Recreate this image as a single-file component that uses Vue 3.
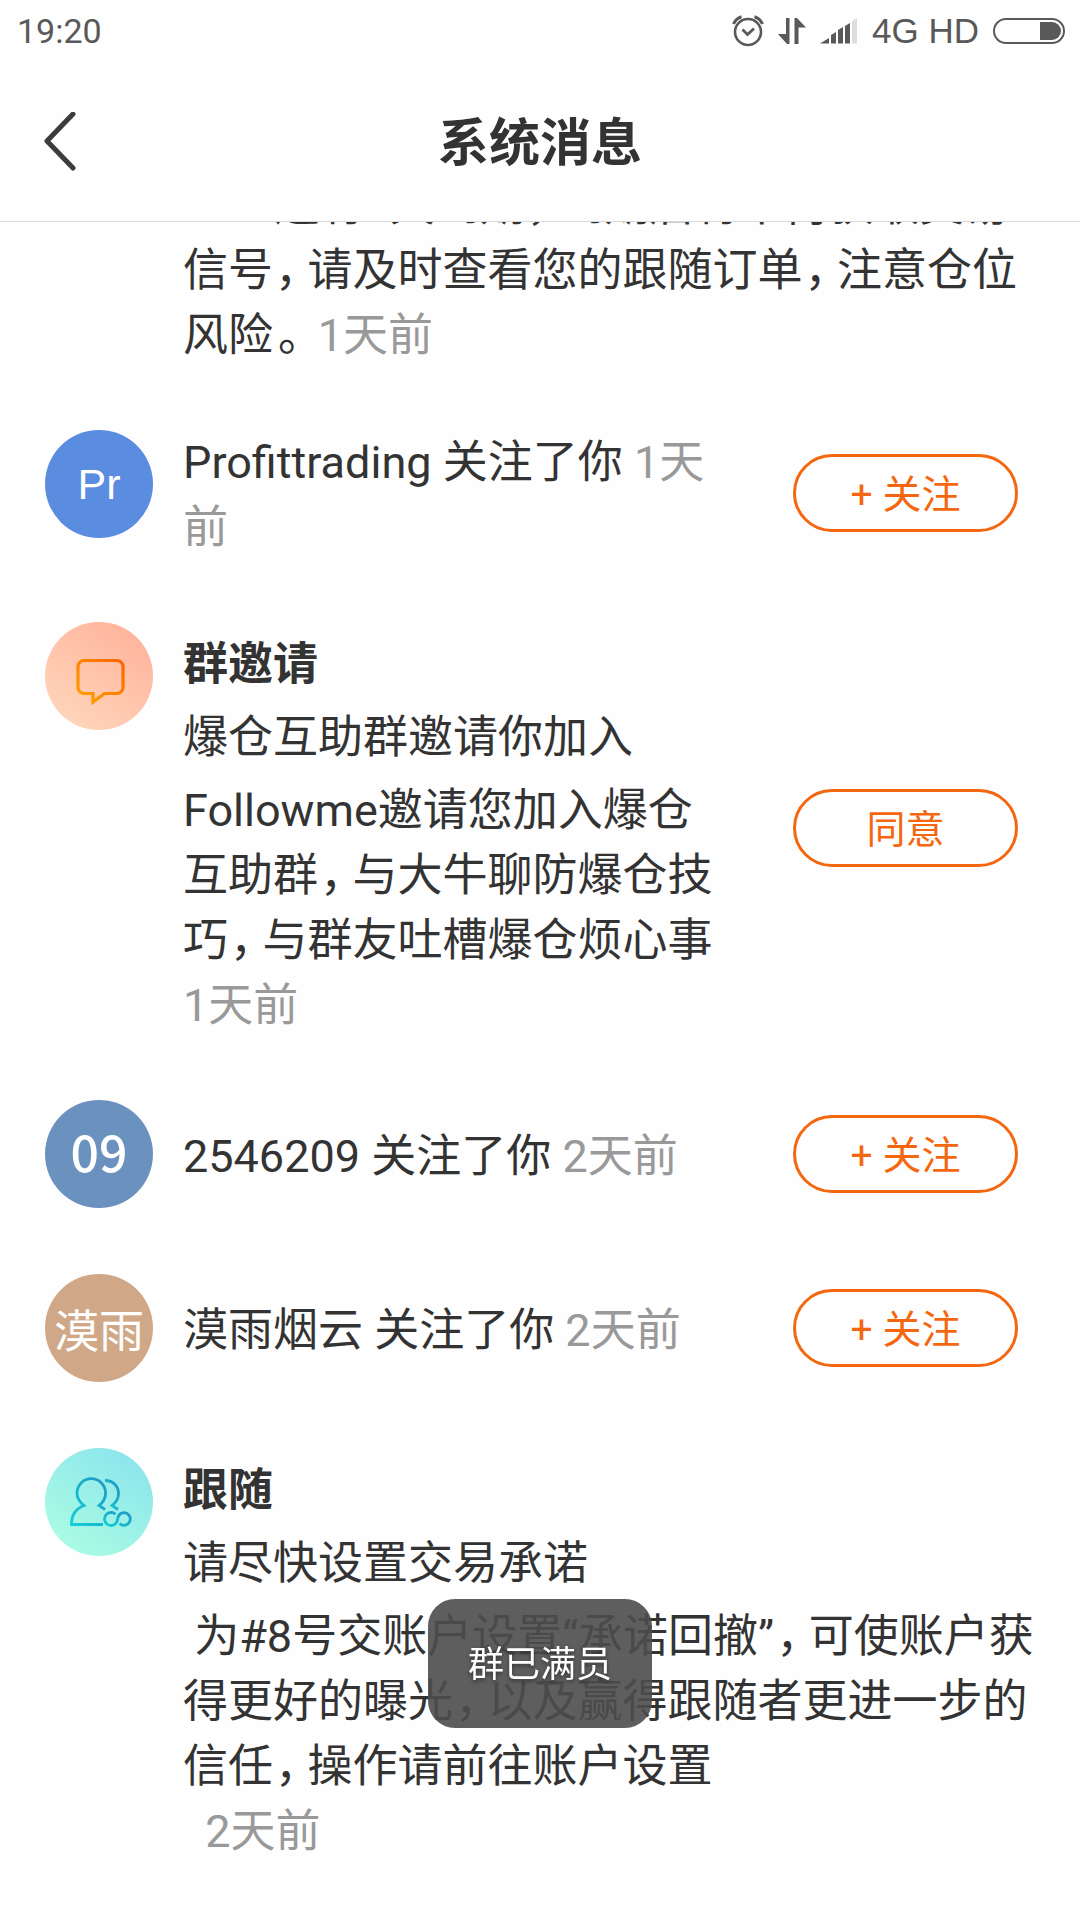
<script setup>
const messages = [
  {
    id: 1,
    body: 'EA8 还有3天到期，到期后将不再获取交易信号，请及时查看您的跟随订单，注意仓位风险。',
    time: '1天前',
  },
  { id: 2, avatar: 'blue', initials: 'Pr', body: 'Profittrading 关注了你', time: '1天前', action: '+ 关注' },
  {
    id: 3,
    avatar: 'invite',
    title: '群邀请',
    subtitle: '爆仓互助群邀请你加入',
    body: 'Followme邀请您加入爆仓互助群，与大牛聊防爆仓技巧，与群友吐槽爆仓烦心事',
    time: '1天前',
    action: '同意',
  },
  { id: 4, avatar: 'steel', initials: '09', body: '2546209 关注了你', time: '2天前', action: '+ 关注' },
  { id: 5, avatar: 'tan', initials: '漠雨', body: '漠雨烟云 关注了你', time: '2天前', action: '+ 关注' },
  {
    id: 6,
    avatar: 'follow',
    title: '跟随',
    subtitle: '请尽快设置交易承诺',
    body: '\u00a0为#8号交账户设置“承诺回撤”，可使账户获得更好的曝光，以及赢得跟随者更进一步的信任，操作请前往账户设置',
    time: '\u00a0\u00a02天前',
    timeBelow: true,
  },
]

// Full-width punctuation uses its half-width form with a little room on each side.
const marks = { '，': 'comma', '。': 'stop' }
const split = (text) => text.split(/([，。])/).filter(Boolean)
</script>

<template>
  <div class="screen">
    <header class="top">
      <div class="status">
        <span class="clock">19:20</span>
        <div class="indicators">
          <svg class="alarm" width="32" height="32" viewBox="0 0 32 32" fill="none" stroke="#595959">
            <circle cx="16" cy="17" r="13" stroke-width="2.6" />
            <path d="M10.500 14.500 15.500 19.500 22 13.500" stroke-width="2.800" />
            <path d="M1.500 9Q4 3.500 9.500 1.800M30.500 9Q28 3.500 22.500 1.800" stroke-width="3" />
          </svg>
          <svg class="data" width="28" height="28" viewBox="0 0 28 28" fill="#595959">
            <path d="M8 1h3.500v26H9L0 17h8zM16.500 1H19l9 9.500h-7.500V27h-4z" />
          </svg>
          <svg class="signal" width="38" height="26" viewBox="0 0 38 26" fill="#595959">
            <path d="M0 25.500 9 20v5.500zM11 17l5-3v11.500h-5zM18 12l5-3v16.500h-5zM25 8l5-3v20.500h-5z" />
            <path d="M32 3l5-3v25.500h-5z" fill="#dedede" />
          </svg>
          <span class="network">4G HD</span>
          <svg class="battery" width="72" height="26" viewBox="0 0 72 26">
            <rect x="1" y="1" width="70" height="24" rx="12" fill="none" stroke="#595959" stroke-width="2" />
            <path d="M47 4h12a9 9 0 0 1 0 18H47z" fill="#595959" />
          </svg>
        </div>
      </div>
      <nav class="nav">
        <button class="back" type="button" aria-label="返回">
          <svg width="34" height="60" viewBox="0 0 34 60" fill="none" stroke="#3c3c3c" stroke-width="5" stroke-linecap="round" stroke-linejoin="round">
            <path d="M30 2 4 29l26 27" />
          </svg>
        </button>
        <h1>系统消息</h1>
      </nav>
    </header>

    <main class="viewport">
      <ul class="list">
        <li v-for="m in messages" :key="m.id" class="row" :class="{ rich: m.title }">
          <div class="avatar" :class="m.avatar">
            <span v-if="m.initials">{{ m.initials }}</span>
            <svg v-else-if="m.avatar === 'invite'" width="108" height="108" viewBox="0 0 108 108" fill="none">
              <defs>
                <linearGradient id="bubble" x1="1" y1="0" x2="0" y2="1">
                  <stop offset="0" stop-color="#ff6400" />
                  <stop offset="1" stop-color="#ffa200" />
                </linearGradient>
              </defs>
              <path d="M39 38.500h33a6 6 0 0 1 6 6v21a6 6 0 0 1-6 6H59.500L48 80v-8.500h-9a6 6 0 0 1-6-6v-21a6 6 0 0 1 6-6z" stroke="url(#bubble)" stroke-width="3.200" />
            </svg>
            <svg v-else-if="m.avatar === 'follow'" width="108" height="108" viewBox="0 0 108 108" fill="none" stroke-width="2.800">
              <defs>
                <linearGradient id="people" x1="1" y1="0" x2="0" y2="1">
                  <stop offset="0" stop-color="#1f97c4" />
                  <stop offset="1" stop-color="#12cfd6" />
                </linearGradient>
              </defs>
              <g stroke="url(#people)">
                <path d="M58 76.500H26.500C26.500 67 31 60.500 39 57.500 34.500 54 32 50 32 45a14.300 14.300 0 0 1 28.600 0c0 5-2.600 9.500-6.600 12.500l6 4" />
                <path d="M60 32.500c8 0 13.500 5.500 13.500 13 0 5-2.500 9-6.500 12l6 4" />
                <path d="M70.500 66.300A6.500 6.500 0 1 0 72 73.500C73 70 73 65 78 64.800a6.300 6.300 0 1 1-3.500 10.700" />
              </g>
            </svg>
          </div>

          <div class="content">
            <h2 v-if="m.title">{{ m.title }}</h2>
            <p v-if="m.subtitle">{{ m.subtitle }}</p>
            <p>
              <template v-for="(part, i) in split(m.body)" :key="i"><span v-if="marks[part]" :class="marks[part]">{{ part }}</span><template v-else>{{ part }}</template></template>
              {{ ' ' }}<time :class="{ below: m.timeBelow }">{{ m.time }}</time>
            </p>
          </div>

          <button v-if="m.action" class="action" type="button">{{ m.action }}</button>
        </li>
      </ul>
    </main>

    <div class="toast" role="status">群已满员</div>
  </div>
</template>

<style>
body {
  background: #fefefe;
}
</style>

<style scoped>
.screen {
  font-family: Roboto, 'Noto Sans CJK SC', sans-serif;
  color: #333;
  min-height: 100vh;
  overflow: hidden;
}

.top {
  border-bottom: 1px solid #d9d9d9;
}

.status {
  display: flex;
  justify-content: space-between;
  align-items: center;
  height: 62px;
  padding: 0 15px 0 17px;
  font-size: 34px;
  line-height: 62px;
  color: #595959;
}

.indicators {
  display: flex;
  align-items: center;
  gap: 14px;
}

.network {
  font-family: 'Liberation Sans', sans-serif;
  font-size: 35px;
}

.nav {
  display: grid;
  grid-template-columns: 120px 1fr 120px;
  align-items: center;
  height: 159px;
}

.back {
  display: flex;
  align-items: center;
  height: 100%;
  padding: 0 0 0 43px;
  border: 0;
  background: none;
}

h1 {
  margin: 0;
  padding-top: 4px;
  text-align: center;
  font-size: 51px;
  line-height: 65px;
  font-weight: 700;
}

.viewport {
  overflow: hidden;
}

.list {
  display: flex;
  flex-direction: column;
  gap: 62px;
  margin: -49px 0 0;
  padding: 0 37px 62px 45px;
  list-style: none;
}

.row {
  display: flex;
  align-items: center;
  min-height: 112px;
}

.avatar {
  flex: none;
  align-self: flex-start;
  display: flex;
  align-items: center;
  justify-content: center;
  width: 108px;
  height: 108px;
  margin-right: 30px;
  border-radius: 50%;
  color: #fff;
  font-size: 45px;
  white-space: nowrap;
}

.blue {
  background: #5a8ce0;
  font-family: 'Liberation Sans', sans-serif;
  font-size: 43px;
}

.steel {
  background: #6b92bf;
  font-family: 'Noto Sans CJK SC', sans-serif;
  font-size: 50px;
  font-weight: 500;
  line-height: 60px;
  align-items: flex-start;
  padding-top: 20px;
  box-sizing: border-box;
}

.tan {
  background: #d0a888;
}

.invite {
  background: linear-gradient(215deg, #ffb39c 10%, #ffd6bb 90%);
}

.follow {
  background: linear-gradient(215deg, #8ee6ec 15%, #a9fbe3 85%);
}

.content {
  flex: 1;
  min-width: 0;
  font-size: 45px;
  line-height: 65px;
}

.rich .content {
  display: flex;
  flex-direction: column;
  gap: 8px;
  padding-top: 10px;
}

h2,
p {
  margin: 0;
  font-size: 45px;
  line-height: 65px;
}

.comma,
.stop {
  font-feature-settings: 'halt';
}

.comma {
  padding: 0 10px 0 2px;
}

.stop {
  padding: 0 6px 0 5px;
}

time {
  color: #999;
}

.below {
  display: block;
}

.action {
  flex: none;
  width: 225px;
  height: 78px;
  margin: 0 25px 4px 70px;
  padding: 4px 0 0;
  border: 3px solid #f5670f;
  border-radius: 39px;
  background: none;
  color: #f5670f;
  font-family: inherit;
  font-size: 39px;
  line-height: 68px;
}

.toast {
  position: fixed;
  bottom: 192px;
  left: 50%;
  transform: translateX(-50%);
  padding: 34px 40px 30px;
  border-radius: 27px;
  background: rgba(77, 77, 77, 0.9);
  color: #fff;
  font-size: 36px;
  line-height: 65px;
  text-shadow: 0 2px 4px rgba(0, 0, 0, 0.5);
  white-space: nowrap;
}
</style>
